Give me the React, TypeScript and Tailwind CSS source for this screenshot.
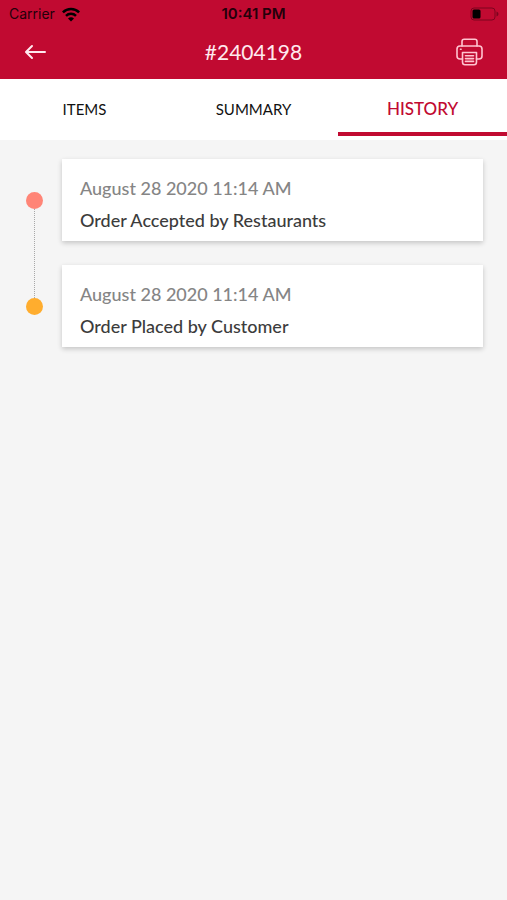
type HistoryEntry = {
  date: string;
  label: string;
  dot: string;
};

const TABS = ["ITEMS", "SUMMARY", "HISTORY"];

const HISTORY: HistoryEntry[] = [
  {
    date: "August 28 2020 11:14 AM",
    label: "Order Accepted by Restaurants",
    dot: "bg-[#ff8577]",
  },
  {
    date: "August 28 2020 11:14 AM",
    label: "Order Placed by Customer",
    dot: "bg-[#ffad2e]",
  },
];

function StatusBar() {
  return (
    <div className="grid h-7 grid-cols-3 items-center px-2 font-['Inter',sans-serif] text-[14px] leading-5 text-[#24000a]">
      <div className="flex items-center gap-1.5 pl-px">
        <span>Carrier</span>
        <svg width="20" height="15" viewBox="0 0 20 15" fill="none" stroke="#000" strokeWidth="2.5">
          <path d="M1.9 5.4a11.6 11.6 0 0 1 16.2 0" />
          <path d="M5 8.9a7.1 7.1 0 0 1 10 0" />
          <path d="M10 14.4 7 11.4a4.2 4.2 0 0 1 6 0z" fill="#000" stroke="none" />
        </svg>
      </div>
      <span className="text-center text-[15px] font-semibold">10:41 PM</span>
      <svg className="justify-self-end" width="30" height="14" viewBox="0 0 30 14">
        <rect x="2" y="1" width="24" height="12" rx="3" fill="none" stroke="#7c041f" strokeWidth="1" />
        <rect x="3.5" y="2.5" width="8" height="9" rx="1.5" fill="#000" />
        <path d="M27.5 4.5v5q2-.8 2-2.5t-2-2.5z" fill="#7c041f" />
      </svg>
    </div>
  );
}

function Header() {
  return (
    <header className="bg-[#c10a31]">
      <StatusBar />
      <div className="flex h-[51px] items-center justify-between px-6 pb-1 text-white">
        <button type="button" aria-label="Back" className="w-7">
          <svg width="22" height="16" viewBox="0 0 22 16" fill="none" stroke="#ffe9ee" strokeWidth="2" strokeLinecap="round" strokeLinejoin="round">
            <path d="M21 8H2.5M8 2 2 8l6 6" />
          </svg>
        </button>
        <h1 className="text-[21px] leading-7 text-[#ffe9ee]">#2404198</h1>
        <button type="button" aria-label="Print" className="w-7">
          <svg width="28" height="28" viewBox="0 0 28 28" fill="none" stroke="#ffc4d0" strokeWidth="1.6" strokeLinecap="round" strokeLinejoin="round">
            <path d="M7 8V3.4Q7 1.2 9.2 1.2h10.6Q22 1.2 22 3.4V8" />
            <path d="M7.5 21H5q-3 0-3-3v-7q0-3 3-3h19q3 0 3 3v7q0 3-3 3h-2.5" />
            <path d="M7.5 14.5h14v9.5q0 2.7-2.5 2.7H10q-2.5 0-2.5-2.7z" />
            <path d="M10.5 17.8h8M10.5 20.6h8M10.5 23.4h8" />
            <path d="M5.5 11.3h.6" />
          </svg>
        </button>
      </div>
    </header>
  );
}

function Tabs({ active }: { active: string }) {
  return (
    <nav className="grid grid-cols-3 bg-white pb-1">
      {TABS.map((tab) => (
        <button
          key={tab}
          type="button"
          className={
            tab === active
              ? "h-[57px] border-b-4 border-[#c10a31] pt-1.5 text-[17px] font-medium leading-6 text-[#c10a31]"
              : "h-[57px] border-b-4 border-transparent pt-1.5 text-[15px] leading-6 text-[#111111]"
          }
        >
          {tab}
        </button>
      ))}
    </nav>
  );
}

function TimelineItem({ entry, last }: { entry: HistoryEntry; last: boolean }) {
  return (
    <li className="flex items-center">
      <div className="relative mr-[19px] flex w-[17px] justify-center">
        <span className={`size-[17px] rounded-full ${entry.dot}`} />
        {/* connector down to the next dot */}
        {!last && (
          <span className="absolute top-full h-[89px] border-l border-dotted border-[#a8a8a8]" />
        )}
      </div>
      <div className="flex-1 bg-white px-[18px] pt-[17px] pb-[9px] shadow-[0_2px_5px_rgba(0,0,0,0.2)]">
        <p className="mb-2 text-[18px] font-medium leading-6 text-[#858585]">{entry.date}</p>
        <p className="text-[18px] font-medium leading-6 text-[#3c3c3c]">{entry.label}</p>
      </div>
    </li>
  );
}

export default function App() {
  return (
    <div className="min-h-screen w-full bg-[#f5f5f5] font-['Lato',sans-serif]">
      <Header />
      <Tabs active="HISTORY" />
      <main className="pt-[19px] pr-6 pl-[26px]">
        <ul className="space-y-6">
          {HISTORY.map((entry, idx) => (
            <TimelineItem key={idx} entry={entry} last={idx === HISTORY.length - 1} />
          ))}
        </ul>
      </main>
    </div>
  );
}
